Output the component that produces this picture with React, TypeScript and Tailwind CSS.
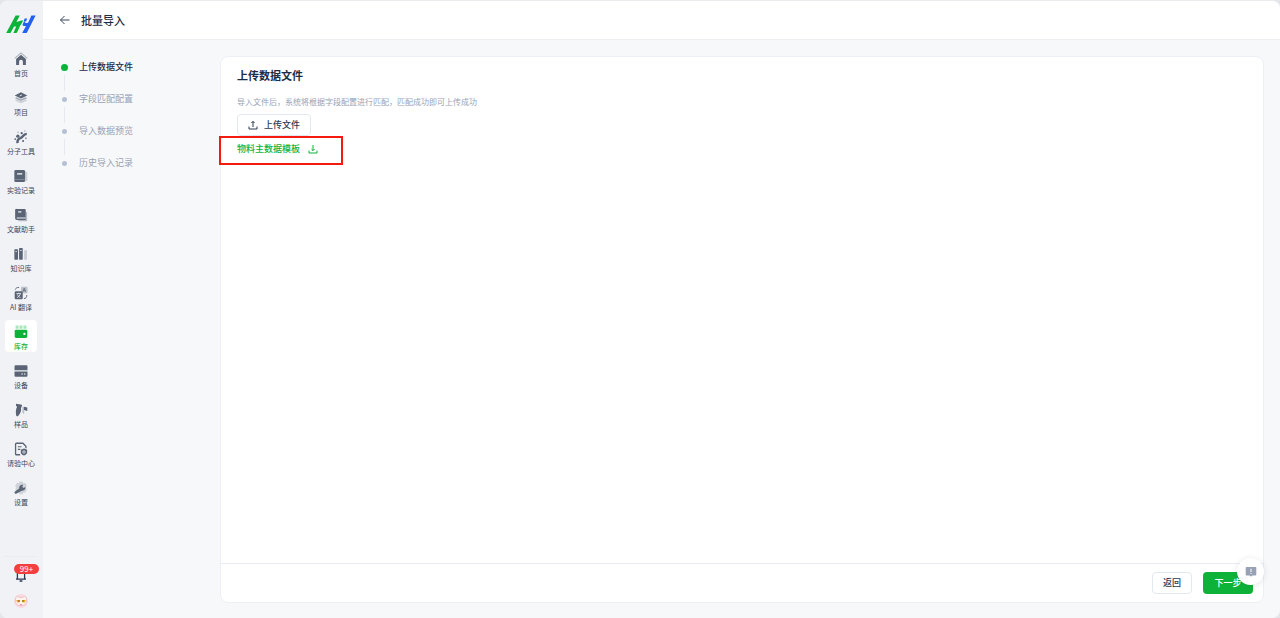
import type { ReactNode } from 'react'
import { clsx } from 'clsx'

interface NavItem {
  label: string
  icon: ReactNode
}

const navItems: NavItem[] = [
  {
    label: '首页',
    icon: (
      <>
        <path d="M.8 7.400 8 1l7.200 6.400" fill="none" stroke="currentColor" strokeWidth="1.200" opacity=".45" />
        <path d="M8 3.200 13.600 8v6.800h-3.400V11a2.200 2.200 0 0 0-4.400 0v3.800H2.400V8z" />
      </>
    ),
  },
  {
    label: '项目',
    icon: (
      <>
        <path d="m1 10.800 7 3.200 7-3.200-2-1-5 2.200-5-2.200z" opacity=".25" />
        <path d="m1 8.200 7 3.200 7-3.200-2-1-5 2.200-5-2.200z" opacity=".5" />
        <path d="M8 1.400 15.200 5 8 8.600.8 5z" />
        <path d="M6.500 5.600 9 4.600" stroke="#f0f2f6" strokeWidth="1" />
      </>
    ),
  },
  {
    label: '分子工具',
    icon: (
      <>
        <path d="M4 15c-.4-3 1-5 3.400-5.800C10.400 8.400 10 4.800 14.600 4.400" fill="none" stroke="currentColor" strokeWidth="2.800" />
        <circle cx="4.400" cy="7" r="1.900" />
        <circle cx="10.400" cy="12.600" r="1.200" />
        <circle cx="1.400" cy="10.400" r="1" />
        <circle cx="8.800" cy="3.600" r="1.300" />
        <circle cx="4.600" cy="2.600" r=".9" opacity=".5" />
        <circle cx="13.600" cy="9.400" r="1.100" opacity=".6" />
        <circle cx="12.400" cy="1.200" r=".8" opacity=".5" />
      </>
    ),
  },
  {
    label: '实验记录',
    icon: (
      <>
        <path d="M12.500 3H14a1.200 1.200 0 0 1 1.200 1.200v8.600A1.200 1.200 0 0 1 14 14h-1.500z" opacity=".25" />
        <rect x=".4" y="1.200" width="12.200" height="13.600" rx="1.400" />
        <path d="M3.600 5.600h5.800" stroke="#fff" strokeWidth="1.400" />
        <path d="M.4 12h12.200" stroke="#8b94a3" strokeWidth=".8" />
      </>
    ),
  },
  {
    label: '文献助手',
    icon: (
      <>
        <path d="M13.200 4.500h.8a1 1 0 0 1 1 1V14a1 1 0 0 1-1 1H5v-1.400h8.200z" opacity=".4" />
        <path d="M3 1h9.200a1.200 1.200 0 0 1 1.200 1.200v11.400H3.200A1.900 1.900 0 0 1 1.300 12V2.600A1.600 1.600 0 0 1 3 1z" />
        <path d="M3.200 11.400h10" stroke="#f0f2f6" strokeWidth="1.200" />
        <path d="M4.800 4.400h3.600" stroke="#f0f2f6" strokeWidth="1.200" />
      </>
    ),
  },
  {
    label: '知识库',
    icon: (
      <>
        <rect x=".4" y="2.600" width="4.200" height="12" rx=".8" />
        <rect x="5.800" y="1.200" width="4.200" height="13.400" rx=".8" />
        <path d="m11.600 4 2.200-.5a.8.8 0 0 1 1 .8v9.500a.8.8 0 0 1-.8.8h-2.400z" opacity=".25" />
        <path d="M1.700 5.200h1.600M7.100 4h1.600" stroke="#f0f2f6" strokeWidth="1" />
      </>
    ),
  },
  {
    label: 'AI 翻译',
    icon: (
      <>
        <rect x="8" y=".8" width="7.400" height="7.400" rx="1.200" opacity=".35" />
        <path d="m10.100 6.500 1.600-4 1.600 4M10.600 5.300h2.200" fill="none" stroke="currentColor" strokeWidth=".9" />
        <rect x=".8" y="6" width="9.200" height="9.200" rx="1.400" />
        <path d="M2.800 8.600H8M5.400 7.600v1M3.400 13.200c2-.8 3.400-2.400 3.800-4.400M3.800 9.600c.6 1.700 1.800 3 3.600 3.600" fill="none" stroke="#f0f2f6" strokeWidth=".9" />
        <path d="M1.400 4.200C2 2.400 3.400 1.600 5.800 1.600M14.600 10.400c0 2.600-1 3.800-3.200 4" fill="none" stroke="currentColor" strokeWidth="1.100" />
      </>
    ),
  },
  {
    label: '库存',
    icon: (
      <>
        <path d="M1.800.6h3.400v3.600H1.800zM6.300.6h3.400v3.600H6.300zM10.800.6h3.400v3.600h-3.400z" opacity=".35" />
        <rect x=".8" y="5.400" width="14.400" height="9.400" rx="1.600" />
        <circle cx="11.900" cy="10.200" r="1.300" fill="#fff" />
      </>
    ),
  },
  {
    label: '设备',
    icon: (
      <>
        <path d="M1.800 1.400h12.400a1.200 1.200 0 0 1 1.200 1.200v4.600H.6V2.600a1.200 1.200 0 0 1 1.200-1.200z" />
        <path d="M.6 8.600h14.800v4.800a1.200 1.200 0 0 1-1.200 1.200H1.800a1.200 1.200 0 0 1-1.200-1.200z" />
        <path d="M8.400 11.400h1.600M11.400 11.400H13" stroke="#fff" strokeWidth="1.200" />
      </>
    ),
  },
  {
    label: '样品',
    icon: (
      <>
        <path d="M2.400.8 9.200 2l-.4 2.200-.8 1.400c.6 3.400-.6 6.600-3.600 9.400-.8.600-1.900 0-1.900-1C1.800 10.600 2 7 3.600 4.400L2.200 3z" />
        <path d="m9.600 4 2 .6v8.600l-2-2.600z" opacity=".35" />
        <path d="m11.400 4.200 3.800 1v3.800l-3.800-1z" />
      </>
    ),
  },
  {
    label: '请验中心',
    icon: (
      <>
        <path d="M7 14.600H2.800a1 1 0 0 1-1-1V2.400a1 1 0 0 1 1-1h7.400l3.400 3.400V7" fill="none" stroke="currentColor" strokeWidth="1.500" />
        <path d="M4.400 5.400h4.200M4.400 8.400h2.800" stroke="currentColor" strokeWidth="1.200" />
        <path d="m11.400 7.400 3.600 1.400v2.800c0 1.900-1.500 3.100-3.600 3.900-2.100-.8-3.600-2-3.600-3.900V8.800z" />
        <circle cx="11.400" cy="11.400" r="1.400" fill="none" stroke="#f0f2f6" strokeWidth=".9" />
      </>
    ),
  },
  {
    label: '设置',
    icon: (
      <>
        <path
          d="m6.200.6h3.600l.8 2 2.200-.2 1.900 3.100-1.200 2.300 1.200 2.300-1.900 3.100-2.200-.2-.8 2H6.200l-.8-2-2.200.2-1.900-3.100 1.200-2.300-1.200-2.300 1.900-3.100 2.200.2z"
          opacity=".22"
        />
        <path d="M.8 12.200 6 8.600c-.5-2 .8-4 3-4.300l1.600.1-1.200 2 1.400 1.500 2.400-1c.2 2.600-1.600 4.500-4.400 4.100L3 14.400c-1.400.8-3-.8-2.200-2.200z" />
      </>
    ),
  },
]

const steps = ['上传数据文件', '字段匹配配置', '导入数据预览', '历史导入记录']

function Logo() {
  return (
    <svg viewBox="0 0 30 20" className="h-5 w-[30px]" aria-label="logo">
      <path
        d="M9.600 1.400h4.200L10.400 8l5-1.600h1.800l-1 2.200-2.200 3.400-2.800 6.200c-.2.500-.6.700-1.200.7H7.400l2.800-6.300H8L4.800 18.400c-.3.500-.7.700-1.300.7H.2z"
        fill="#0db339"
      />
      <path
        d="M25.400 1.400h4.200l-8.600 17c-.3.500-.8.700-1.400.7h-3.400l3.800-7.100h-2c-1.200 0-1.700-.7-1.300-1.700l1-2.200 1.500-.9-.2 1.600c1.200.5 2.200.4 3.200-.4z"
        fill="#2461f2"
      />
      <path d="M18.600 4.400h2.600l-1.200 3h-2.400z" fill="#2461f2" />
    </svg>
  )
}

function Sidebar() {
  return (
    <aside className="flex w-[43px] shrink-0 flex-col items-center bg-[#f0f2f6] pt-[13px] pr-px pb-[10px]">
      <Logo />
      <nav className="mt-[13px] flex flex-col gap-[7px]">
        {navItems.map((item) => {
          const active = item.label === '库存'
          return (
            <a
              key={item.label}
              href="#"
              className={clsx(
                'flex h-8 w-8 flex-col items-center gap-[3px] rounded pt-[5px]',
                active ? 'bg-white font-medium text-[#0db339]' : 'text-[#5a6475]'
              )}
            >
              <svg viewBox="0 0 16 16" className="size-[14px] shrink-0" fill="currentColor">
                {item.icon}
              </svg>
              <span className={clsx('text-[7px] leading-[8px] whitespace-nowrap', !active && 'text-[#3d485c]')}>
                {item.label}
              </span>
            </a>
          )
        })}
      </nav>

      <div className="mt-auto flex w-8 flex-col items-center gap-[12px] border-t border-[#e8ebf0] pt-[11px]">
        <button type="button" aria-label="通知" className="relative text-[#2c3850]">
          <svg viewBox="0 0 12 14" className="h-[14px] w-3" fill="none" stroke="currentColor" strokeWidth="1.300">
            <path d="M2.400 11V5a3.600 3.600 0 0 1 7.200 0v6M1 11.200h10M4.600 13h2.800" />
          </svg>
          <span className="absolute -top-[4px] -left-px h-[10px] w-[25px] rounded-full bg-[#f53f3f] text-center text-[8px] leading-[10px] text-white">
            99+
          </span>
        </button>
        <button type="button" aria-label="个人中心">
          <svg viewBox="0 0 14 14" className="size-[14px]">
            <circle cx="7" cy="7" r="7" fill="#fbd9e0" />
            <path d="M1.600 4.200 3.400 2l1.600 1.400h4L10.600 2l1.800 2.200v4.200L9.800 11.400H4.200L1.600 8.400z" fill="#fff3ee" stroke="#d9a4ae" strokeWidth=".5" />
            <path d="M2.200 6h3.600l.4 1.200L5 8.600H3.200zM8.200 6h3.600l-1 2.600H9L7.800 7.200z" fill="#f2ac22" />
            <circle cx="5" cy="7" r=".8" fill="#6b4c57" />
            <circle cx="9" cy="7" r=".8" fill="#6b4c57" />
            <path d="M5.600 10.200h2.800L7.600 11.600H6.400z" fill="#e78a9b" />
          </svg>
        </button>
      </div>
    </aside>
  )
}

function Steps() {
  return (
    <ol className="w-[177px] shrink-0 pt-[11px] pl-[18px]">
      {steps.map((step, i) => (
        <li key={step} className="flex h-8 gap-[11px]">
          <div className="flex w-[7px] flex-col items-center">
            <div className="flex h-4 items-center">
              <span className={clsx('rounded-full', i === 0 ? 'size-[7px] bg-[#0db339]' : 'size-[5px] bg-[#b7c0d2]')} />
            </div>
            {i < steps.length - 1 && <span className="w-px flex-1 bg-[#e5e8ee]" />}
          </div>
          <span className={clsx('text-[9px] leading-4', i === 0 ? 'font-medium text-[#1d2b45]' : 'text-[#98a2b6]')}>
            {step}
          </span>
        </li>
      ))}
    </ol>
  )
}

export default function App() {
  return (
    <div className="min-h-screen bg-[#e3e5e8] font-['Noto_Sans_CJK_SC','Noto_Sans',sans-serif]">
      <div className="relative flex min-h-screen overflow-hidden rounded-lg border-t border-[#e9ebee] bg-[#f7f8fa]">
        <Sidebar />

        <div className="flex min-w-0 flex-1 flex-col">
          <header className="flex h-[39px] items-center gap-[10px] border-b border-[#eceef2] bg-white pl-4">
            <button type="button" aria-label="返回上一页" className="text-[#3a465c]">
              <svg viewBox="0 0 12 12" className="size-3" fill="none" stroke="currentColor" strokeWidth="1">
                <path d="M10.500 6h-9M5.500 2l-4 4 4 4" />
              </svg>
            </button>
            <h1 className="text-[11px] leading-4 font-medium text-[#1d2b45]">批量导入</h1>
          </header>

          <div className="flex flex-1 pt-4 pr-4 pb-[15px]">
            <div className="-mt-2">
              <Steps />
            </div>

            <main className="flex min-w-0 flex-1 flex-col rounded-lg border border-[#eceff4] bg-white">
              <section className="flex-1 px-4 pt-[10px]">
                <h2 className="text-[11px] leading-4 font-bold text-[#1d2b45]">上传数据文件</h2>
                <p className="mt-[13px] text-[8px] leading-3 text-[#98a2b6]">
                  导入文件后，系统将根据字段配置进行匹配，匹配成功即可上传成功
                </p>
                <button
                  type="button"
                  className="mt-[6px] flex h-[22px] items-center gap-[6px] rounded border border-[#e3e7ee] px-[10px] text-[9px] font-medium text-[#2c3850]"
                >
                  <svg viewBox="0 0 10 10" className="size-[10px]" fill="none" stroke="currentColor" strokeWidth="1">
                    <path d="M1 6.500V9h8V6.500M5 7V1.500M3.400 3 5 1.400 6.600 3" />
                  </svg>
                  上传文件
                </button>
                <div className="relative mt-[5px] w-fit">
                  <a href="#" className="flex items-center gap-2 text-[9px] leading-4 font-medium text-[#0db339]">
                    物料主数据模板
                    <svg viewBox="0 0 10 10" className="size-[10px]" fill="none" stroke="currentColor" strokeWidth="1">
                      <path d="M1 6.500V9h8V6.500M5 1v5.500M3.400 5 5 6.600 6.600 5" />
                    </svg>
                  </a>
                  <div className="pointer-events-none absolute -top-[5px] -left-[18px] h-[29px] w-[124px] border-2 border-[#f5190f]" />
                </div>
              </section>

              <footer className="flex items-center justify-end gap-[11px] border-t border-[#e8ebf0] py-2 pr-[10px]">
                <button
                  type="button"
                  className="h-[22px] w-10 rounded border border-[#e3e7ee] text-[9px] font-medium text-[#2c3850]"
                >
                  返回
                </button>
                <button type="button" className="h-[22px] w-[50px] rounded bg-[#0db339] text-[9px] font-medium text-white">
                  下一步
                </button>
              </footer>
            </main>
          </div>
        </div>

        <button
          type="button"
          aria-label="反馈"
          className="absolute right-4 bottom-[33px] flex size-[27px] items-center justify-center rounded-full bg-white shadow-[0_1px_6px_rgba(30,45,80,0.12)]"
        >
          <svg viewBox="0 0 12 12" className="size-3">
            <path d="M1.500 1h9a.8.8 0 0 1 .8.800v6.900a.8.8 0 0 1-.8.800H7.300L6 10.800 4.700 9.500H1.500a.8.8 0 0 1-.8-.8V1.800a.8.8 0 0 1 .8-.8z" fill="#98a2b6" />
            <path d="M6 2.800v3.200M6 7v1" stroke="#fff" strokeWidth="1" />
          </svg>
        </button>
      </div>
    </div>
  )
}
